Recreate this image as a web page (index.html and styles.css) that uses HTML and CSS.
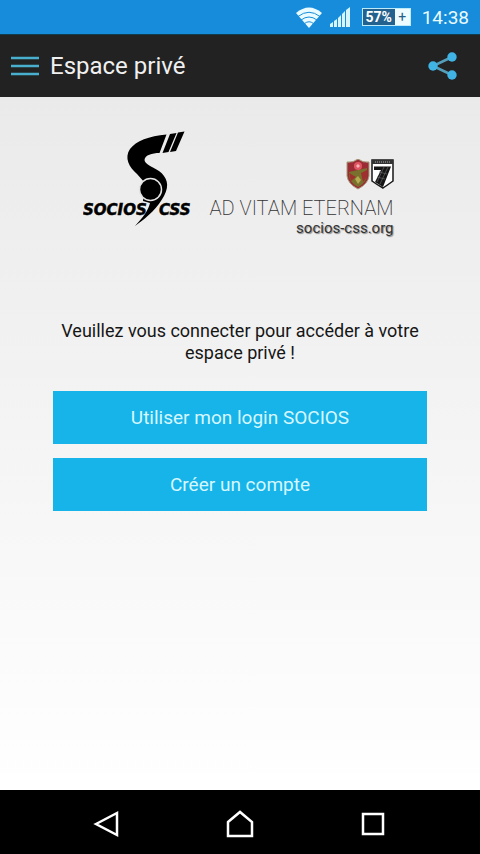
FILE: index.html
```html
<!DOCTYPE html>
<html lang="fr">
<head>
<meta charset="utf-8">
<meta name="viewport" content="width=device-width, initial-scale=1">
<title>Espace privé</title>
<link rel="stylesheet" href="styles.css">
</head>
<body>
<div class="status">
  <svg class="wifi" width="26" height="21" viewBox="0 0 26 21" aria-hidden="true">
    <path d="M0 6Q13-5 26 6L13 21Z" fill="#e9fbff"/>
    <path d="M2 9.500Q13 1 24 9.500M5 13Q13 7 21 13M8.500 16.500Q13 13 17.500 16.500" fill="none" stroke="#168cda" stroke-width="1"/>
  </svg>
  <svg class="signal" width="20" height="20" viewBox="0 0 20 20" aria-hidden="true">
    <path d="M0 20v-3l3-2v5zM4 20v-6l3-2v8zM8 20v-9l3-3v12zM12 20V7l3-3v16zM16 20V3l4-3v20z" fill="#d5f4fb"/>
  </svg>
  <div class="battery">
    <span class="battery-level">57%</span>
    <span class="battery-plus">+</span>
  </div>
  <time class="clock">14:38</time>
</div>
<header class="bar">
  <button class="icon-button" type="button" aria-label="Menu">
    <svg width="28" height="20" viewBox="0 0 28 20"><path d="M0 2h28M0 10h28M0 18h28" stroke="#48afcf" stroke-width="2.600"/></svg>
  </button>
  <h1 class="title">Espace privé</h1>
  <button class="icon-button" type="button" aria-label="Partager">
    <svg width="30" height="28" viewBox="0 0 30 28">
      <path d="M24 5L5 14l19 9" fill="none" stroke="#559db9" stroke-width="2.600"/>
      <g fill="#3fb4e5"><circle cx="5" cy="14" r="4.700"/><circle cx="24" cy="5" r="4.700"/><circle cx="24" cy="23" r="4.700"/></g>
    </svg>
  </button>
</header>
<main class="content">
  <div class="brand">
    <svg class="logo" width="110" height="98" viewBox="0 0 110 98" role="img" aria-label="SOCIOS CSS">
      <path d="M83.500 3.500C66 5 53 10 47 18C41 27 46 36 54 43L62 52L60 70L67 72C65 80 60 86 52 95C66 85 75 76 81 65C87 54 84 46 76 40C68 35 62 33 61.500 29C62 24 69 22 76.500 22Z"/>
      <path d="M87 3L93.500 2L85.500 21L79.500 22ZM95 1.500L101.500 0.500L93 20L87 21Z"/>
      <circle cx="67.500" cy="58.500" r="11" stroke="#e4e4e4" stroke-width="1.500"/>
      <text class="logo-text" x="0" y="84">SOCIOS</text>
      <text class="logo-text" x="76" y="84">CSS</text>
    </svg>
    <div class="tagline">
      <svg width="48" height="32" viewBox="0 0 48 32" aria-hidden="true">
        <path d="M1 3Q7 4 12 0Q17 4 23 3V17Q22 25 12 30Q2 25 1 17Z" fill="#9b2c35" stroke="#a79c7c"/>
        <path d="M3 13L21 9V17Q20 24 12 28Q4 24 3 17Z" fill="#78702c"/>
        <path d="M3 14L10 18L5 22ZM15 14l6-3v7l-4 5z" fill="#9e302d"/>
        <circle cx="12" cy="7" r="4" fill="#e05563"/>
        <path d="M10 7l2-2 2 2-2 2z" fill="#f8b5b5"/>
        <path d="M9 20l3-3 3 4-3 4z" fill="#b4aa52"/>
        <path d="M26 1H47V22Q43 25 37 29Q30 25 26 22Z" fill="#fff" stroke="#171717" stroke-width="1.500"/>
        <path d="M26 1H47V5H26Z" fill="#333"/>
        <path d="M29 3h15" stroke="#aaa" stroke-width="1" stroke-dasharray="1 1"/>
        <path d="M28 7.500H45L37 28L29 23L35 11H28Z" fill="#151515"/>
        <path d="M38 8L31 23M42 8L34 25M33 13l8 2M31 18l8 2" stroke="#666" stroke-width=".700"/>
      </svg>
      <span class="motto">AD VITAM ETERNAM</span>
      <span class="site">socios-css.org</span>
    </div>
  </div>
  <p class="message">Veuillez vous connecter pour accéder à votre espace privé !</p>
  <div class="actions">
    <button class="action" type="button">Utiliser mon login SOCIOS</button>
    <button class="action" type="button">Créer un compte</button>
  </div>
</main>
<nav class="system" aria-label="Navigation">
  <button class="system-button" type="button" aria-label="Retour"><svg width="28" height="28" viewBox="0 0 28 28"><path d="M3 14L24 3V25Z"/></svg></button>
  <button class="system-button" type="button" aria-label="Accueil"><svg width="28" height="28" viewBox="0 0 28 28"><path d="M2 12L14 2L26 12V26H2Z"/></svg></button>
  <button class="system-button" type="button" aria-label="Applications"><svg width="28" height="28" viewBox="0 0 28 28"><path d="M4 4H24V24H4Z"/></svg></button>
</nav>
</body>
</html>
```
FILE: styles.css
```css
* { box-sizing: border-box; }
body {
  margin: 0;
  min-height: 100vh;
  display: flex;
  flex-direction: column;
  font-family: Roboto, "Liberation Sans", sans-serif;
  color: #161616;
  background: #fff;
}
button {
  font: inherit;
  border: 0;
  padding: 0;
  margin: 0;
  background: none;
}
svg { display: block; }
.status {
  display: flex;
  align-items: center;
  justify-content: flex-end;
  height: 34px;
  padding: 0 11px;
  color: #e9fbff;
  background: #168cda;
}
.signal { margin-left: 8px; }
.battery {
  display: flex;
  align-items: center;
  height: 18px;
  margin-left: 12px;
  border: 1px solid #bdeaf9;
  background: #bdeaf9;
  font-size: 14px;
  line-height: 16px;
}
.battery-level {
  width: 32px;
  text-align: center;
  font-weight: 700;
  color: #fff;
  background: #23618f;
}
.battery-plus {
  width: 15px;
  text-align: center;
  color: #246087;
  background: #effcff;
}
.clock {
  margin-left: 11px;
  font-size: 19px;
}
.bar {
  display: flex;
  align-items: center;
  height: 63px;
  padding: 0 22px 0 11px;
  color: #f0f0f0;
  background: #222;
  border-top: 1px solid #123c4c;
}
.title {
  flex: 1;
  margin: 0 0 0 11px;
  font-size: 24px;
  font-weight: 400;
  line-height: 32px;
}
.content {
  flex: 1;
  padding: 34px 53px;
  background: linear-gradient(#eaeaea, #fff);
}
.brand {
  display: flex;
  justify-content: center;
  gap: 16px;
  padding-right: 3px;
}
.logo-text {
  font: italic 700 15px "DejaVu Sans", sans-serif;
  stroke: #000;
  stroke-width: 0.5px;
}
.tagline {
  display: flex;
  flex-direction: column;
  align-items: flex-end;
  padding-top: 28px;
  color: #333;
}
.motto {
  margin-top: 5px;
  font-size: 20px;
  font-weight: 200;
  line-height: 24px;
  white-space: nowrap;
}
.site {
  font-size: 15px;
  line-height: 16px;
  text-shadow: 1px 1px 1px #888;
}
.message {
  margin: 84px 0 0;
  font-size: 18px;
  line-height: 22px;
  text-align: center;
}
.actions {
  display: flex;
  flex-direction: column;
  gap: 14px;
  margin-top: 27px;
}
.action {
  height: 53px;
  font-size: 19px;
  color: #d6f7ff;
  background: #16b4e9;
}
.system {
  display: flex;
  justify-content: center;
  gap: 105px;
  height: 64px;
  padding-top: 4px;
  background: #000;
}
.system-button path {
  fill: none;
  stroke: #fff;
  stroke-width: 2.5px;
}
```
